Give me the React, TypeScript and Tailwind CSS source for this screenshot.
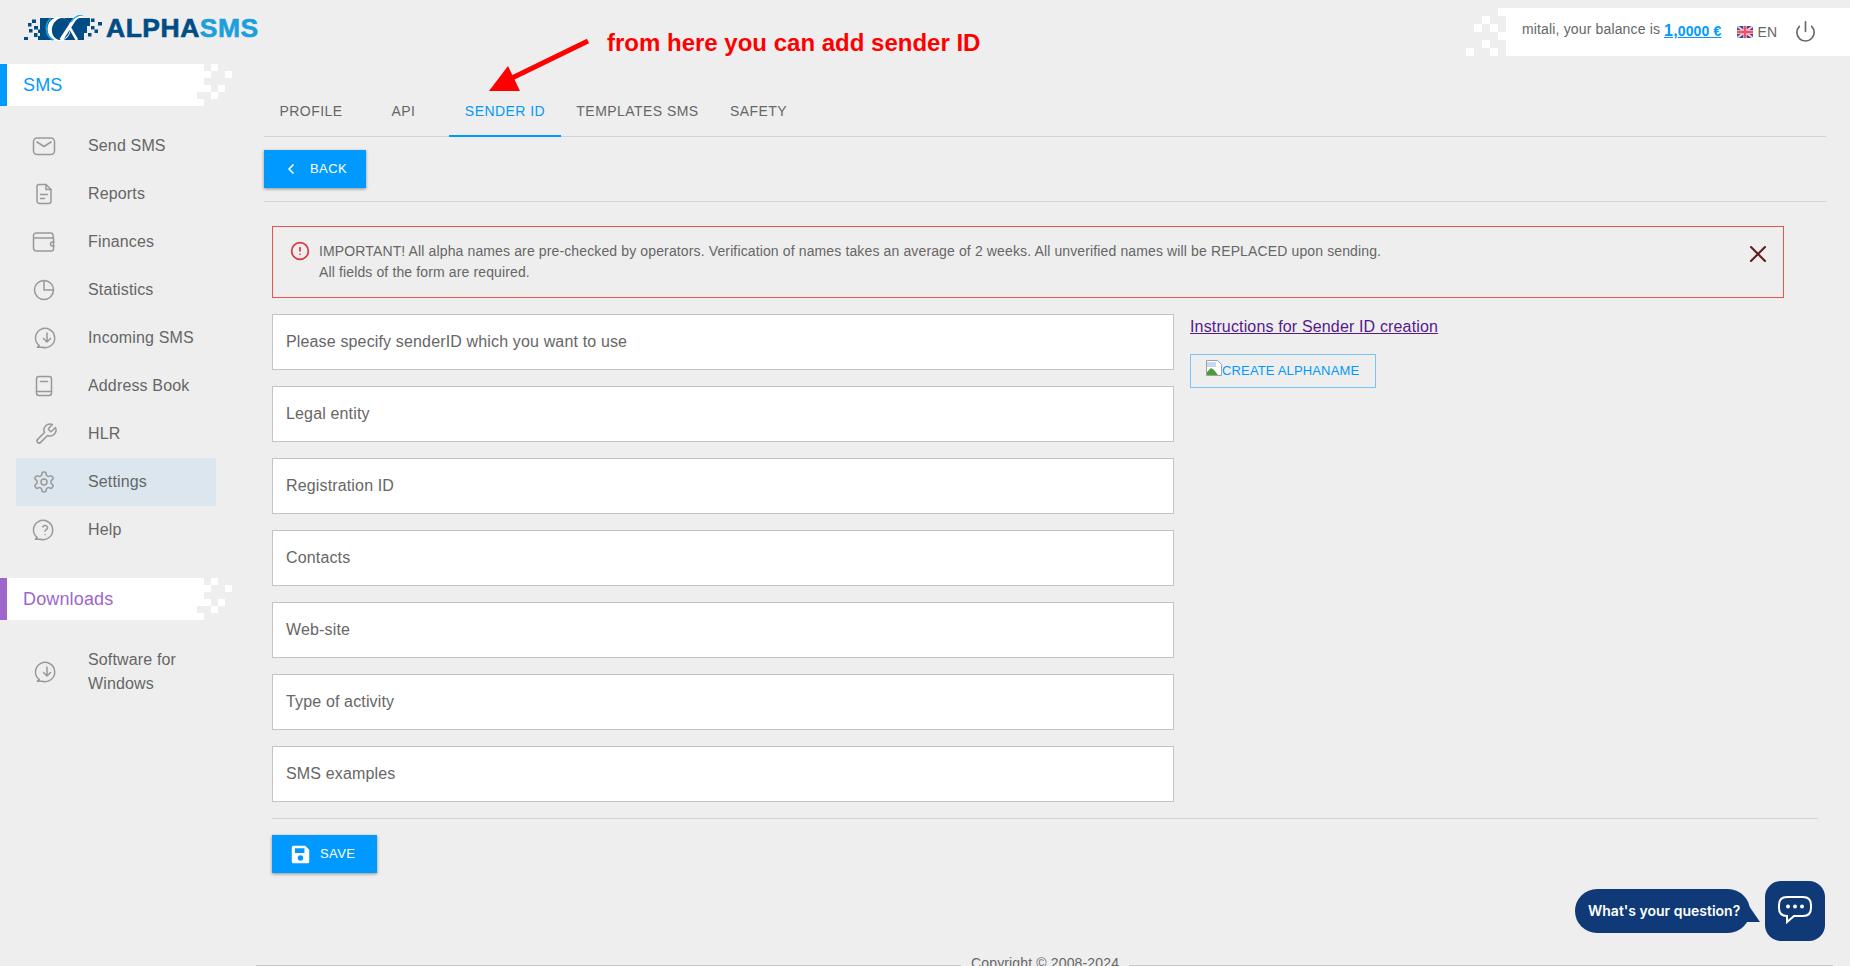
import { ChevronLeft, CircleAlert, Power, X } from 'lucide-react';

const fields = [
  'Please specify senderID which you want to use',
  'Legal entity',
  'Registration ID',
  'Contacts',
  'Web-site',
  'Type of activity',
  'SMS examples',
];

function IconBox({ children }: { children: React.ReactNode }) {
  return (
    <svg
      viewBox="0 0 24 24"
      className="h-6 w-6 overflow-visible"
      fill="none"
      stroke="#999"
      strokeWidth="1.5"
      strokeLinecap="round"
      strokeLinejoin="round"
    >
      {children}
    </svg>
  );
}

const incomingIcon = (
  <g transform="translate(3 0)">
    <path d="M4.3 19.7a9.6 9.6 0 1 1 2.9 1.5H2.4z" />
    <path d="M12 7v9M8.500 12.500L12 16l3.500-3.500" />
  </g>
);

const menu = [
  {
    label: 'Send SMS',
    icon: (
      <>
        <rect x="1.5" y="4" width="21" height="16.500" rx="3.5" />
        <path d="M5 8l7 4.5L19 8" />
      </>
    ),
  },
  {
    label: 'Reports',
    icon: (
      <>
        <path d="M7 2.500h7l5 5v11.500a2.500 2.500 0 0 1-2.500 2.500h-9A2.500 2.500 0 0 1 5 19V4.500a2 2 0 0 1 2-2z" />
        <path d="M14 2.500v5h5M8.500 12.500h7M8.500 16.500h4" />
      </>
    ),
  },
  {
    label: 'Finances',
    icon: (
      <>
        <path d="M21 8V6.500A2.500 2.500 0 0 0 18.500 3H4a2.500 2.500 0 0 0-2.500 2.500V18A3 3 0 0 0 4.500 21h15a2 2 0 0 0 2-2V8H2" />
        <path d="M22 12h-1.500a2 2 0 0 0 0 4H22" />
      </>
    ),
  },
  {
    label: 'Statistics',
    icon: (
      <>
        <circle cx="12" cy="12" r="9.500" />
        <path d="M12 2.500V12h9.500" />
      </>
    ),
  },
  {
    label: 'Incoming SMS',
    icon: incomingIcon,
  },
  {
    label: 'Address Book',
    icon: (
      <>
        <rect x="4.500" y="2.500" width="15" height="19" rx="2.500" />
        <path d="M8.500 7.500h7M4.500 17.500h15" />
      </>
    ),
  },
  {
    label: 'HLR',
    icon: (
      <path
        transform="translate(2 0)"
        d="M14.700 6.300a1 1 0 0 0 0 1.400l1.600 1.600a1 1 0 0 0 1.400 0l3.770-3.770a6 6 0 0 1-7.940 7.940l-6.910 6.910a2.120 2.120 0 0 1-3-3l6.910-6.910a6 6 0 0 1 7.940-7.940l-3.760 3.760z"
      />
    ),
  },
  {
    label: 'Settings',
    active: true,
    icon: (
      <>
        <path d="M12.220 2h-.44a2 2 0 0 0-2 2v.18a2 2 0 0 1-1 1.730l-.43.25a2 2 0 0 1-2 0l-.15-.08a2 2 0 0 0-2.730.73l-.22.38a2 2 0 0 0 .73 2.730l.15.1a2 2 0 0 1 1 1.720v.51a2 2 0 0 1-1 1.740l-.15.09a2 2 0 0 0-.73 2.730l.22.38a2 2 0 0 0 2.730.73l.15-.08a2 2 0 0 1 2 0l.43.25a2 2 0 0 1 1 1.730V20a2 2 0 0 0 2 2h.44a2 2 0 0 0 2-2v-.18a2 2 0 0 1 1-1.730l.43-.25a2 2 0 0 1 2 0l.15.08a2 2 0 0 0 2.730-.73l.22-.39a2 2 0 0 0-.73-2.730l-.15-.08a2 2 0 0 1-1-1.740v-.5a2 2 0 0 1 1-1.740l.15-.09a2 2 0 0 0 .73-2.730l-.22-.38a2 2 0 0 0-2.730-.73l-.15.08a2 2 0 0 1-2 0l-.43-.25a2 2 0 0 1-1-1.730V4a2 2 0 0 0-2-2z" />
        <circle cx="12" cy="12" r="3" />
      </>
    ),
  },
  {
    label: 'Help',
    icon: (
      <g transform="translate(1 0)">
        <path d="M4.300 19.700a9.600 9.600 0 1 1 2.900 1.500H2.400z" />
        <path d="M9.800 9a2.500 2.500 0 0 1 4.800.8c0 1.700-2.500 2-2.500 3.500M12.100 16.500v.1" />
      </g>
    ),
  },
];

// white pixels that crumble off the right end of a banner
function Crumbs() {
  return (
    <svg viewBox="0 0 28 42" className="h-[42px] w-[28px] shrink-0" fill="#fff">
      <rect x="7" y="0" width="7" height="7" />
      <rect x="0" y="7" width="7" height="7" />
      <rect x="21" y="7" width="7" height="7" />
      <rect x="0" y="21" width="7" height="7" />
      <rect x="14" y="21" width="7" height="7" />
      <rect x="7" y="28" width="7" height="7" />
    </svg>
  );
}

function Banner({ label, stripe, text }: { label: string; stripe: string; text: string }) {
  return (
    <div className="flex h-[42px]">
      <div className={`relative flex w-[204px] items-center border-l-[7px] bg-white pl-4 text-lg ${stripe} ${text}`}>
        {label}
        <span className="absolute top-[28px] right-0 h-[7px] w-[7px] bg-[#eee]" />
      </div>
      <Crumbs />
    </div>
  );
}

function Logo() {
  return (
    <div className="flex h-[26px] items-center">
      <svg viewBox="0 0 80 26" className="h-[26px] w-[80px] shrink-0">
        <g fill="#004c85">
          <rect x="0" y="22" width="4" height="3" />
          <rect x="4" y="8" width="3.500" height="3.500" />
          <rect x="8" y="4.500" width="4" height="3.500" />
          <rect x="5" y="14" width="3.500" height="3.500" />
          <rect x="10" y="11" width="4" height="3.500" />
          <rect x="10" y="18" width="3.500" height="4" />
          <rect x="14" y="21" width="3" height="4" />
          <rect x="14" y="14.500" width="3" height="3.500" />
          <rect x="67" y="3.500" width="3.500" height="3.500" />
          <rect x="74" y="7" width="4" height="3.500" />
          <rect x="67" y="11" width="3.500" height="3.500" />
          <rect x="70.500" y="14.500" width="3.500" height="3.500" />
          <rect x="64" y="18" width="3.500" height="3.500" />
          <path d="M16 3h50v8h-3v7h-3v7H16z" />
        </g>
        <ellipse cx="35" cy="14" rx="11.500" ry="12" fill="#fff" />
        <path d="M27 3C21 8 20 20 29 25" stroke="#1ba0dc" strokeWidth="1.600" fill="none" />
        <ellipse cx="37" cy="14" rx="9" ry="11" fill="#004c85" transform="rotate(14 37 14)" />
        <path d="M58 1c-5 0-7 2-10 7L37 25" stroke="#fff" strokeWidth="3.500" fill="none" />
        <path d="M59 0c-6 0-9 2-12 7" stroke="#1ba0dc" strokeWidth="1.200" fill="none" />
        <path d="M46 13l7 12" stroke="#fff" strokeWidth="2.500" fill="none" />
      </svg>
      <span className="ml-[2px] text-[26.500px] leading-none font-bold tracking-[0.5px] [-webkit-text-stroke:0.6px]">
        <span className="text-[#004c85]">ALPHA</span>
        <span className="text-[#1ba0dc]">SMS</span>
      </span>
    </div>
  );
}

function Sidebar() {
  return (
    <aside className="w-[256px] shrink-0">
      <div className="px-6 pt-[15px]">
        <Logo />
      </div>
      <div className="mt-[23px]">
        <Banner label="SMS" stripe="border-[#0099ff]" text="text-[#0099ff]" />
      </div>
      <nav className="mt-4 ml-4 w-[200px]">
        {menu.map((item) => (
          <div key={item.label} className={`flex h-12 items-center ${item.active ? 'bg-[#dbe6ee]' : ''}`}>
            <div className="ml-[16px] flex w-[24px] justify-center">
              <IconBox>{item.icon}</IconBox>
            </div>
            <span className="ml-[32px]">{item.label}</span>
          </div>
        ))}
      </nav>
      <div className="mt-6">
        <Banner label="Downloads" stripe="border-[#9c66cc]" text="text-[#9c66cc]" />
      </div>
      <div className="mt-[28px] ml-4 flex w-[200px] items-center">
        <div className="ml-[16px] flex w-[24px] justify-center">
          <IconBox>{incomingIcon}</IconBox>
        </div>
        <span className="ml-[32px] leading-6">
          Software for
          <br />
          Windows
        </span>
      </div>
    </aside>
  );
}

function TopBar() {
  return (
    <div className="absolute top-2 right-0 flex h-12 w-[344px] items-start bg-white pt-[11px] pl-4 text-sm">
      <svg viewBox="0 0 40 48" className="absolute top-0 -left-10 h-12 w-10" fill="#fff">
        <rect x="32" y="0" width="8" height="8" />
        <rect x="16" y="8" width="8" height="8" />
        <rect x="8" y="16" width="8" height="8" />
        <rect x="24" y="16" width="8" height="8" />
        <rect x="32" y="24" width="8" height="8" />
        <rect x="16" y="32" width="8" height="8" />
        <rect x="0" y="40" width="8" height="8" />
        <rect x="24" y="40" width="8" height="8" />
      </svg>
      <span>mitali, your balance is</span>
      <span className="ml-1 text-sm font-bold text-[#0099ff] underline">
        <span className="text-base">1,</span>0000 €
      </span>
      <svg viewBox="0 0 60 40" preserveAspectRatio="none" className="mt-[7px] ml-4 h-3 w-4">
        <rect width="60" height="40" fill="#3b4a9c" />
        <path d="M0 0l60 40M60 0L0 40" stroke="#f4c7d0" strokeWidth="7" />
        <path d="M30 0v40M0 20h60" stroke="#f4c7d0" strokeWidth="13" />
        <path d="M30 0v40M0 20h60" stroke="#e8526b" strokeWidth="8" />
      </svg>
      <span className="mt-[3px] ml-1">EN</span>
      <Power className="mt-[1px] ml-[17px] h-[23px] w-[23px]" strokeWidth={1.7} color="#666" />
    </div>
  );
}

function Main() {
  return (
    <main className="relative min-w-0 flex-1 pr-6 pl-2">
      <div className="mt-[89px] flex h-12 border-b border-[#d2d2d2] text-sm tracking-[0.45px]">
        <div className="flex w-[94px] items-center justify-center pb-[3px]">PROFILE</div>
        <div className="flex w-[91px] items-center justify-center pb-[3px]">API</div>
        <div className="-mb-px flex w-[112px] items-center justify-center border-b-2 border-[#0099ff] pb-[3px] text-[#0099ff]">
          SENDER ID
        </div>
        <div className="flex w-[153px] items-center justify-center pb-[3px]">TEMPLATES SMS</div>
        <div className="flex w-[89px] items-center justify-center pb-[3px]">SAFETY</div>
      </div>
      <div className="h-[65px] border-b border-[#d2d2d2] pt-[13px]">
        <button className="flex h-[38px] w-[102px] items-center bg-[#0099ff] pl-[19px] text-[13px] tracking-[0.4px] text-white shadow-[0_1px_3px_rgba(0,0,0,0.4)]">
          <ChevronLeft className="h-4 w-4" strokeWidth={2.5} />
          <span className="ml-[11px]">BACK</span>
        </button>
      </div>

      <div className="mt-6 mr-[42px] ml-2 flex h-[72px] items-start border border-[#ef5350] pt-[14px] pl-[17px] text-sm tracking-[0.13px]">
        <CircleAlert className="h-5 w-5 shrink-0" color="#d9363e" strokeWidth={2} />
        <p className="ml-[9px] flex-1 leading-[21px]">
          IMPORTANT! All alpha names are pre-checked by operators. Verification of names takes an average of 2 weeks. All unverified names will be REPLACED upon sending.
          <br />
          All fields of the form are required.
        </p>
        <X className="mt-[-1px] mr-[11px] h-7 w-7" color="#5f2120" strokeWidth={1.8} />
      </div>

      <div className="mt-4 ml-2 flex">
        <div className="flex w-[902px] shrink-0 flex-col gap-4">
          {fields.map((field) => (
            <div key={field} className="flex h-[56px] items-center border border-[#c4c4c4] bg-white pl-[13px]">
              {field}
            </div>
          ))}
        </div>
        <div className="ml-4 flex flex-col items-start">
          <a href="#" className="mt-[1px] text-[#551a8b] underline">
            Instructions for Sender ID creation
          </a>
          <button className="mt-[15px] flex h-[34px] w-[186px] items-center border border-[#7cc4f5] pl-[15px] text-[13px] text-[#0099ff]">
            <svg viewBox="0 0 16 16" className="mb-[6px] h-4 w-4">
              <path d="M.5.5h11l4 4v11H.5z" fill="#fff" stroke="#a0a0a0" />
              <path d="M1 12l4-4 3 2 4 5H1z" fill="#4a9d3b" />
              <path d="M1 2h9v5H1z" fill="#c6d8f4" />
            </svg>
            CREATE ALPHANAME
          </button>
        </div>
      </div>

      <div className="mt-4 mr-2 ml-2 border-t border-[#d2d2d2] pt-4">
        <button className="flex h-[38px] w-[105px] items-center bg-[#0099ff] pl-[19px] text-[13px] tracking-[0.4px] text-white shadow-[0_1px_3px_rgba(0,0,0,0.4)]">
          <svg viewBox="0 0 24 24" className="h-[19px] w-[19px]" fill="#fff">
            <path d="M3 1h15l5 5v15a2 2 0 0 1-2 2H3a2 2 0 0 1-2-2V3a2 2 0 0 1 2-2zm2 3v6h12V4zm7 9a3.500 3.500 0 1 0 0 7 3.500 3.500 0 0 0 0-7z" fillRule="evenodd" />
          </svg>
          <span className="ml-[10px]">SAVE</span>
        </button>
      </div>
    </main>
  );
}

export default function App() {
  return (
    <div className="relative flex h-[966px] overflow-hidden bg-[#eee] font-['Liberation_Sans',Arial,sans-serif] tracking-[0.15px] text-[#666]">
      <Sidebar />
      <Main />
      <TopBar />

      {/* annotation drawn on top of the screenshot */}
      <svg viewBox="0 0 115 60" className="absolute top-[36px] left-[480px] h-[60px] w-[115px]">
        <path d="M108 5L32 42" stroke="#f00" strokeWidth="5" />
        <path d="M28 30L9 55h31z" fill="#f00" />
      </svg>
      <div className="absolute top-[31px] left-[607px] text-2xl leading-none font-bold tracking-normal text-[#f00]">
        from here you can add sender ID
      </div>

      {/* footer line behind the copyright */}
      <div className="absolute top-[965px] left-[256px] h-px w-[705px] bg-[#c8c8c8]" />
      <div className="absolute top-[965px] left-[1129px] h-px w-[704px] bg-[#c8c8c8]" />
      <div className="absolute top-[953px] left-[971px] text-sm">Copyright © 2008-2024</div>

      {/* chat widget */}
      <div className="absolute top-[889px] left-[1575px] flex h-11 w-[175px] items-center rounded-[22px] bg-[#103a77] pl-[13px] font-['Inter',sans-serif] text-sm font-semibold tracking-normal text-white">
        What's your question?
        <svg viewBox="0 0 20 30" className="absolute top-[6px] -right-[10px] h-[30px] w-5" fill="#103a77">
          <path d="M0 0c4 1 8 6 9 11l11 16H0z" />
        </svg>
      </div>
      <div className="absolute top-[881px] left-[1765px] flex h-[60px] w-[60px] items-center justify-center rounded-2xl bg-[#103a77]">
        <svg viewBox="0 0 36 32" className="h-8 w-9" fill="none" stroke="#fff" strokeWidth="2">
          <path d="M10 2h16c5 0 8 3 8 8v3c0 5-3 8-8 8H17l-7 6v-6c-5 0-8-3-8-8v-3c0-5 3-8 8-8z" />
          <circle cx="11" cy="11.500" r="2" fill="#fff" stroke="none" />
          <circle cx="18" cy="11.500" r="2" fill="#fff" stroke="none" />
          <circle cx="25" cy="11.500" r="2" fill="#fff" stroke="none" />
        </svg>
      </div>
    </div>
  );
}
